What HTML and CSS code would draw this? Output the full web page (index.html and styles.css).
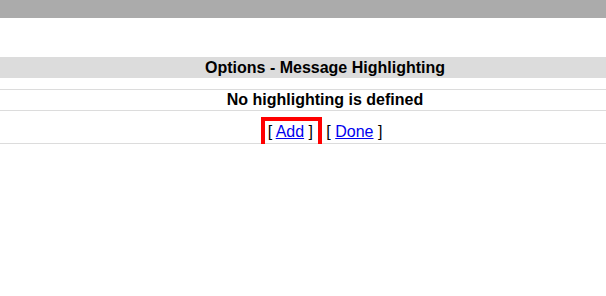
FILE: index.html
```html
<!DOCTYPE html>
<html lang="en">
<head>
    <meta charset="UTF-8">
    <title>Options - Message Highlighting</title>
    <link rel="stylesheet" href="styles.css">
</head>
<body>
    <div class="topbar"></div>

    <div class="section-title">Options - Message Highlighting</div>

    <div class="rows">
        <div class="row empty">No highlighting is defined</div>
        <div class="row actions"><span class="marked">[ <a href="#">Add</a> ]</span> &nbsp; [ <a href="#">Done</a> ]</div>
    </div>
</body>
</html>
```

FILE: styles.css
```css
body {
    margin: 0;
    font-family: "Liberation Sans", Arial, sans-serif;
    font-size: 16px;
    color: #000;
    background-color: #fff;
}
.topbar {
    height: 18px;
    background-color: #ababab;
}

/* the original table is wider than the window, so its centre sits right of ours */
.section-title,
.row {
    padding-left: 44px;
    text-align: center;
}

.section-title {
    margin-top: 39px;
    height: 21px;
    line-height: 21px;
    background-color: #dcdcdc;
    font-weight: bold;
}

.rows {
    margin-top: 11px;
    border-top: 1px solid #dcdcdc;
}
.row {
    border-bottom: 1px solid #dcdcdc;
}
.empty {
    height: 20px;
    line-height: 20px;
    font-weight: bold;
}
.actions {
    height: 20px;
    line-height: 18px;
    padding-top: 12px;
}
.actions a { color: #0000ee; }

.marked {
    position: relative;
}
.marked::after {
    content: "";
    position: absolute;
    left: -7px;
    right: -9px;
    top: -6px;
    bottom: -9px;
    border: 4px solid #ff0000;
}
```
